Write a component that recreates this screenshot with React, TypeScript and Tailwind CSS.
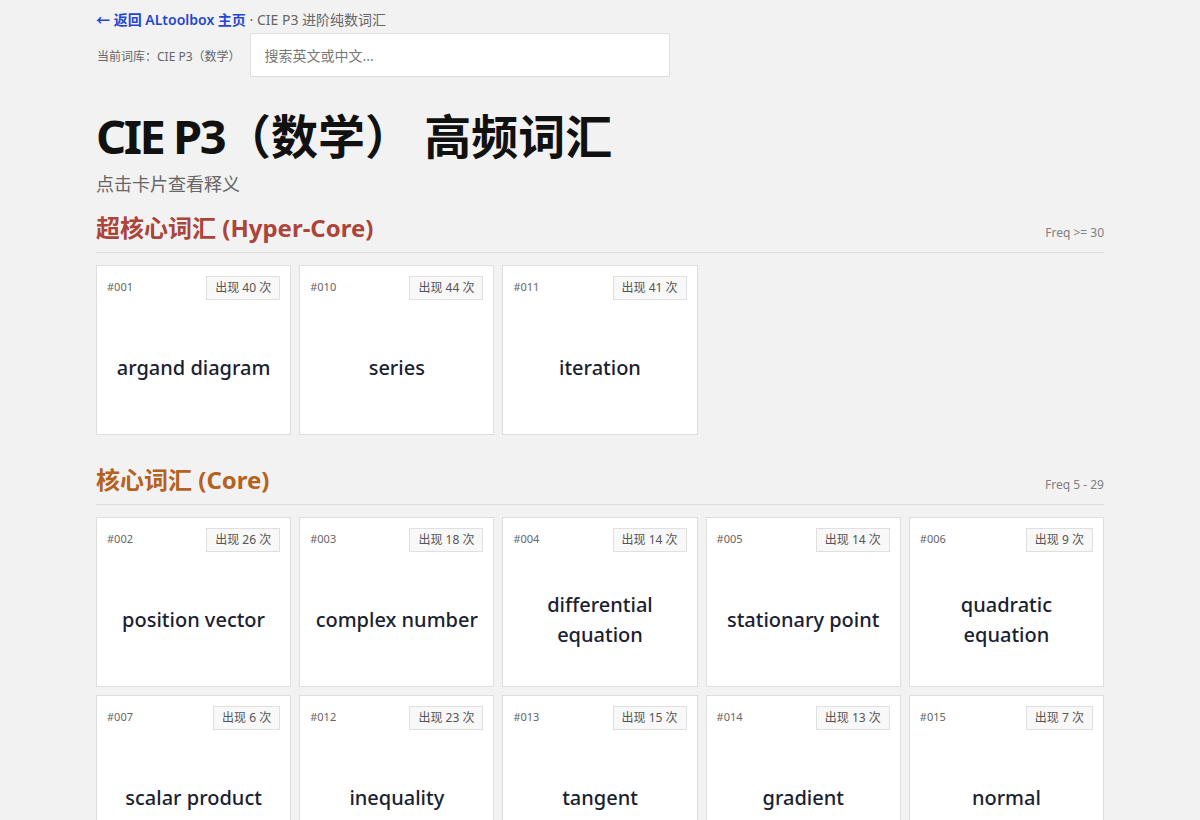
import React from "react";

type Word = { id: string; count: number; word: string };

const hyper: Word[] = [
  { id: "#001", count: 40, word: "argand diagram" },
  { id: "#010", count: 44, word: "series" },
  { id: "#011", count: 41, word: "iteration" },
];

const core: Word[] = [
  { id: "#002", count: 26, word: "position vector" },
  { id: "#003", count: 18, word: "complex number" },
  { id: "#004", count: 14, word: "differential equation" },
  { id: "#005", count: 14, word: "stationary point" },
  { id: "#006", count: 9, word: "quadratic equation" },
  { id: "#007", count: 6, word: "scalar product" },
  { id: "#012", count: 23, word: "inequality" },
  { id: "#013", count: 15, word: "tangent" },
  { id: "#014", count: 13, word: "gradient" },
  { id: "#015", count: 7, word: "normal" },
];

function Card({ w }: { w: Word }) {
  return (
    <div className="flex h-[170px] flex-col border border-[#dedede] bg-white">
      <div className="flex items-center justify-between px-[10px] pt-[10px]">
        <span className="pb-[3px] text-[11px] leading-none text-[#666]">{w.id}</span>
        <span className="flex h-[24px] items-center border border-[#e0e0e0] bg-[#f8f8f8] px-[8px] text-[12px] text-[#555]">
          出现 {w.count} 次
        </span>
      </div>
      <div className="mt-[2px] flex flex-1 items-center justify-center px-[8px] text-center text-[20px] font-medium leading-[30px] text-[#1a2131]">
        {w.word}
      </div>
    </div>
  );
}

function Section({
  title,
  color,
  freq,
  words,
  className,
}: {
  title: string;
  color: string;
  freq: string;
  words: Word[];
  className: string;
}) {
  return (
    <section className={className}>
      <div className="flex items-baseline justify-between border-b border-[#dcdcdc] pb-[8px]">
        <h2 className={`text-[24px] font-bold leading-[32px] ${color}`}>{title}</h2>
        <span className="text-[12px] text-[#808080]">{freq}</span>
      </div>
      <div className="mt-[12px] grid grid-cols-5 gap-2">
        {words.map((w) => (
          <Card key={w.id} w={w} />
        ))}
      </div>
    </section>
  );
}

export default function App() {
  return (
    <div
      className="min-h-screen bg-[#f2f2f2]"
      style={{ fontFamily: '"Noto Sans", "Noto Sans CJK SC", sans-serif' }}
    >
      <div className="mx-auto w-[1008px] pb-10 pt-[10px]">
        <div className="text-[14px] leading-[20px] text-[#666]">
          <a className="font-semibold text-[#1f48d0]">← 返回 ALtoolbox 主页</a>
          <span> · CIE P3 进阶纯数词汇</span>
        </div>
        <div className="mt-[3px] flex items-center gap-[9px]">
          <span className="pl-[1px] pt-[3px] text-[12px] leading-[16px] text-[#666]">当前词库：CIE P3（数学）</span>
          <input
            className="h-[44px] w-[420px] border border-[#dedede] bg-white px-[14px] text-[14px] text-[#333] outline-none placeholder:text-[#777]"
            placeholder="搜索英文或中文..."
          />
        </div>
        <h1 className="mt-[35px] text-[47px] font-bold leading-[48px] text-[#111]">
          <span className="tracking-[-2.5px]">CIE P3</span>（数学） 高频词汇
        </h1>
        <p className="mt-[11px] text-[18px] leading-[27px] text-[#666]">点击卡片查看释义</p>
        <Section
          className="mt-[14px]"
          title="超核心词汇 (Hyper-Core)"
          color="text-[#ab453a]"
          freq="Freq >= 30"
          words={hyper}
        />
        <Section
          className="mt-[29px]"
          title="核心词汇 (Core)"
          color="text-[#b5621e]"
          freq="Freq 5 - 29"
          words={core}
        />
      </div>
    </div>
  );
}
